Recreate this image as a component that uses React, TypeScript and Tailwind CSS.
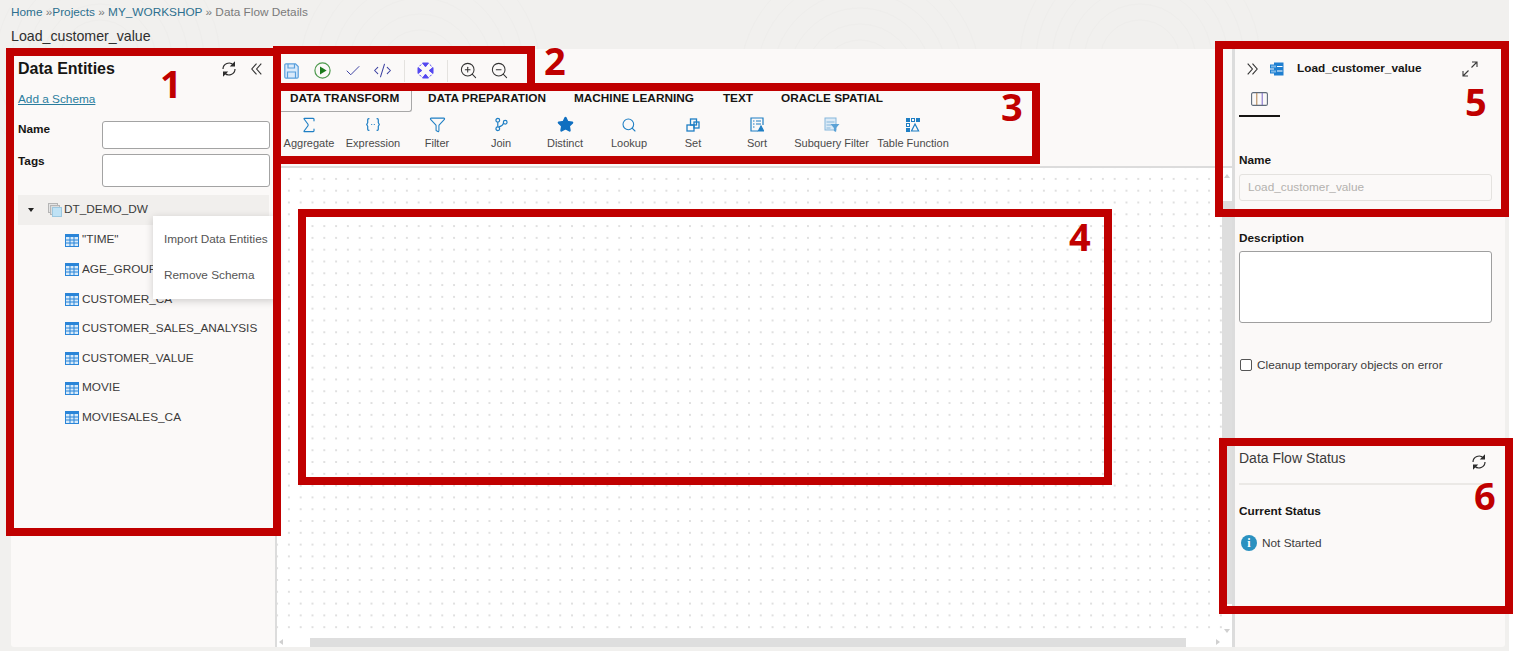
import { Check, CodeXml, Funnel, Search, Sigma, Star, ZoomIn, ZoomOut } from "lucide-react";
import type { ReactNode } from "react";

const ENTITIES = ['"TIME"', "AGE_GROUP", "CUSTOMER_CA", "CUSTOMER_SALES_ANALYSIS", "CUSTOMER_VALUE", "MOVIE", "MOVIESALES_CA"];

const Sync = ({ size = 16 }: { size?: number }) => (
  <svg width={size} height={size} viewBox="0 0 16 16" fill="none" stroke="#2b2b2b" strokeWidth="1.2">
    <path d="M2 8a6 6 0 0 1 10.4-4" />
    <path d="M14 8a6 6 0 0 1-10.4 4" />
    <path d="M13.4 1.6v3.2h-3.2z" fill="#2b2b2b" />
    <path d="M2.6 14.4v-3.2h3.2z" fill="#2b2b2b" />
  </svg>
);

const DoubleChevron = ({ flip = false }: { flip?: boolean }) => (
  <svg width="11" height="12" viewBox="0 0 11 12" fill="none" stroke="#333" strokeWidth="1.1" className={flip ? "rotate-180" : ""}>
    <path d="M5.5.6L.8 6l4.7 5.4" />
    <path d="M10.3.6L5.6 6l4.7 5.4" />
  </svg>
);

const TableIcon = () => (
  <svg width="14" height="13" viewBox="0 0 14 13" className="shrink-0">
    <rect width="14" height="13" fill="#2a85d8" />
    <rect x="1" y="3" width="12" height="9" fill="#d8ebfa" />
    <path d="M5 3v9M9 3v9M1 6h12M1 9h12" stroke="#2a85d8" strokeWidth="1" />
  </svg>
);

const SchemaIcon = () => (
  <svg width="14" height="14" viewBox="0 0 14 14">
    <rect x="0.5" y="0.5" width="9" height="9" fill="#e4e4e4" stroke="#b5b5b5" />
    <rect x="2.5" y="2.5" width="9" height="9" fill="#dcdcdc" stroke="#b5b5b5" />
    <rect x="4.5" y="4.5" width="9" height="9" fill="#bfe2f5" stroke="#9dc8e0" />
  </svg>
);

const SaveIcon = () => (
  <svg width="15" height="16" viewBox="0 0 15 16" fill="#dbeafa" stroke="#5a9fdc" strokeWidth="1.2">
    <path d="M2 .8h9.5l2.7 2.7V14a1.2 1.2 0 0 1-1.2 1.2H2A1.2 1.2 0 0 1 .8 14V2A1.2 1.2 0 0 1 2 .8z" />
    <path d="M4 1v4h6.5V1M3.5 15V9h8v6" fill="none" />
  </svg>
);

const RunIcon = () => (
  <svg width="17" height="17" viewBox="0 0 17 17">
    <circle cx="8.5" cy="8.5" r="7.6" fill="none" stroke="#4e9a4e" strokeWidth="1.2" />
    <path d="M6 4.5l6.6 4-6.6 4z" fill="#1c7a1c" />
  </svg>
);

const FitIcon = () => (
  <svg width="17" height="17" viewBox="0 0 17 17" fill="#5548f0" stroke="#5548f0" strokeWidth="1">
    <path d="M5.500 1h6L8.500 4.800z" />
    <path d="M5.500 16h6L8.500 12.200z" />
    <path d="M1 5.500v6L4.800 8.500z" />
    <path d="M16 5.500v6L12.200 8.500z" />
    <path d="M4.200 2.500L2.500 4.200M12.800 2.500L14.500 4.200M4.200 14.500L2.500 12.800M12.800 14.500L14.500 12.800" fill="none" />
  </svg>
);

const Expression = () => (
  <svg width="14" height="13" viewBox="0 0 14 13" fill="none" stroke="#1f7fc4" strokeWidth="1.2">
    <path d="M3.4.7h-.7a1 1 0 0 0-1 1v3L.7 6.5l1 1.800v3a1 1 0 0 0 1 1h.7" />
    <path d="M10.600.7h.7a1 1 0 0 1 1 1v3l1 1.800-1 1.800v3a1 1 0 0 1-1 1h-.7" />
    <path d="M5.200 6.500h1M7.800 6.500h1" />
  </svg>
);

const Join = () => (
  <svg width="13" height="15" viewBox="0 0 14 15" fill="none" stroke="#1f7fc4" strokeWidth="1.3">
    <circle cx="3" cy="3" r="2" />
    <circle cx="3" cy="12" r="2" />
    <circle cx="11" cy="5" r="2" />
    <path d="M3 5v5M9.200 6a6 6 0 0 1-5 4" />
  </svg>
);

const SetIcon = () => (
  <svg width="14" height="14" viewBox="0 0 14 14" fill="none" stroke="#1f7fc4" strokeWidth="1.300">
    <rect x="4.500" y="1" width="6" height="6" />
    <rect x="8" y="4" width="5" height="6" />
    <rect x="1" y="7" width="7" height="6" />
  </svg>
);

const SortIcon = () => (
  <svg width="14" height="15" viewBox="0 0 14 15" fill="none" stroke="#1f7fc4" strokeWidth="1.200">
    <path d="M8 14H1V1h12v7" />
    <path d="M3 4h1.500M6 4h5M3 7h1.500M6 7h5M3 10h1.500" />
    <path d="M11 9l2.600 5H8.400z" fill="#1f7fc4" />
  </svg>
);

const SubqueryIcon = () => (
  <svg width="16" height="16" viewBox="0 0 16 16" fill="none">
    <rect x="1" y="1" width="11" height="12" fill="#dcebf7" stroke="#86b7db" />
    <path d="M2.500 5h8M2.500 8h5M2.500 11h4" stroke="#86b7db" />
    <path d="M6.500 7h9l-3.400 4v4l-2.200-1v-3z" fill="#5ba2d6" />
  </svg>
);

const TableFunction = () => (
  <svg width="14" height="14" viewBox="0 0 14 14" fill="none" stroke="#1f7fc4">
    <rect x=".5" y=".5" width="3" height="3" fill="#1f7fc4" />
    <rect x="5.500" y=".5" width="3" height="3" />
    <rect x="10.500" y=".5" width="3" height="3" fill="#1f7fc4" />
    <rect x=".5" y="5.500" width="3" height="3" />
    <rect x=".5" y="10.500" width="3" height="3" fill="#1f7fc4" />
    <path d="M9 6l3.600 7H5.500z" strokeWidth="1.200" />
  </svg>
);

const FlowIcon = () => (
  <svg width="14" height="14" viewBox="0 0 14 14">
    <rect x="4" y="0.5" width="9.500" height="13" fill="#1f7fd0" />
    <path d="M5 4.500h7.500M5 9h7.500" stroke="#fff" />
    <rect x="0.5" y="3" width="6" height="3" fill="#7bb8e8" stroke="#1f7fd0" />
    <rect x="0.5" y="8" width="6" height="3" fill="#7bb8e8" stroke="#1f7fd0" />
  </svg>
);

const ExpandIcon = () => (
  <svg width="16" height="16" viewBox="0 0 16 16" fill="none" stroke="#3a3a3a" strokeWidth="1.100">
    <path d="M9.500 6.500L15 1M10 1h5v5" />
    <path d="M6.500 9.500L1 15M1 10v5h5" />
  </svg>
);

const ColumnsIcon = () => (
  <svg width="17" height="14" viewBox="0 0 17 14" fill="none">
    <rect x=".6" y=".6" width="15.800" height="12.800" rx="1.500" stroke="#5f6b7a" strokeWidth="1.100" />
    <path d="M5.800 1v12" stroke="#b07f4a" />
    <path d="M11.200 1v12" stroke="#7a68c8" />
  </svg>
);

const BackgroundSwirls = () => (
  <svg className="absolute inset-0 h-full w-full" viewBox="0 0 1509 651" fill="none" stroke="#eeedeb" strokeWidth="1">
    {[40, 56, 72, 88, 104, 120].map((r) => (
      <g key={r}>
        <circle cx="420" cy="70" r={r} />
        <circle cx="860" cy="80" r={r} />
        <circle cx="1140" cy="60" r={r} />
        <circle cx="100" cy="60" r={r} />
      </g>
    ))}
  </svg>
);

const PALETTE: { label: string; icon: ReactNode; width: string }[] = [
  { label: "Aggregate", icon: <Sigma size={20} color="#1f7fc4" strokeWidth={1.4} />, width: "w-16" },
  { label: "Expression", icon: <Expression />, width: "w-16" },
  { label: "Filter", icon: <Funnel size={17} color="#1f7fc4" strokeWidth={1.5} />, width: "w-16" },
  { label: "Join", icon: <Join />, width: "w-16" },
  { label: "Distinct", icon: <Star size={17} color="#0f6fc0" fill="#0f6fc0" />, width: "w-16" },
  { label: "Lookup", icon: <Search size={16} color="#1f7fc4" strokeWidth={1.6} />, width: "w-16" },
  { label: "Set", icon: <SetIcon />, width: "w-16" },
  { label: "Sort", icon: <SortIcon />, width: "w-16" },
  { label: "Subquery Filter", icon: <SubqueryIcon />, width: "w-[85px]" },
  { label: "Table Function", icon: <TableFunction />, width: "w-[78px]" },
];

const MARKS = [
  { box: "left-[6px] top-[48px] h-[488px] w-[275px]", num: "1", at: "left-[160px] top-[57px]" },
  { box: "left-[273px] top-[46px] h-[45px] w-[262px]", num: "2", at: "left-[544px] top-[34px]" },
  { box: "left-[273px] top-[83px] h-[81px] w-[767px]", num: "3", at: "left-[1001px] top-[80px]" },
  { box: "left-[298px] top-[209px] h-[276px] w-[814px]", num: "4", at: "left-[1069px] top-[210px]" },
  { box: "left-[1215px] top-[41px] h-[176px] w-[294px]", num: "5", at: "left-[1465px] top-[75px]" },
  { box: "left-[1219px] top-[438px] h-[176px] w-[294px]", num: "6", at: "left-[1474px] top-[469px]" },
];

export default function App() {
  return (
    <div className="relative h-[651px] w-full overflow-hidden bg-white font-['Liberation_Sans',Arial,sans-serif] text-[11.8px] text-[#3b3b3b]">
      <div className="relative h-[651px] w-[1509px] bg-[#f1f0ee]">
        <BackgroundSwirls />
        <div className="relative h-[49px] pl-[11px]">
          <div className="pt-[5px] leading-[14px] text-[#7a7a7a]">
            <span className="text-[#2c6f8f]">Home</span> »<span className="text-[#2c6f8f]">Projects</span> »{" "}
            <span className="text-[#2c6f8f]">MY_WORKSHOP</span> » Data Flow Details
          </div>
          <div className="mt-[9px] text-[14.2px] leading-4 text-[#2f2f2f]">Load_customer_value</div>
        </div>

        <div className="relative ml-[11px] flex h-[598px] w-[1494px] rounded-b-[3px] bg-[#fbf9f8]">
          {/* data entities */}
          <aside className="relative w-[266px] shrink-0 border-r-2 border-[#dcdcdc] pl-[7px] pr-[5px]">
            <div className="flex h-[38px] items-center pt-[1px]">
              <h2 className="text-base font-bold text-[#161513]">Data Entities</h2>
              <div className="ml-auto flex items-center gap-[14px] pr-[8px]">
                <Sync />
                <DoubleChevron />
              </div>
            </div>
            <a className="mt-[5px] block leading-[14px] text-[#2a7d9e] underline">Add a Schema</a>
            <div className="mt-[15px] flex h-[28px] items-start">
              <label className="w-[84px] pt-[1px] font-bold leading-[14px] text-[#161513]">Name</label>
              <input className="h-[28px] w-[168px] rounded-[3px] border border-[#a3a3a3] bg-white" />
            </div>
            <div className="mt-[5px] flex h-[33px] items-start">
              <label className="w-[84px] font-bold leading-[14px] text-[#161513]">Tags</label>
              <input className="h-[33px] w-[168px] rounded-[3px] border border-[#a3a3a3] bg-white" />
            </div>
            <div className="mt-[8px] flex h-[30px] w-[251px] items-center bg-[#f1efed] pl-[10px]">
              <span className="mr-[14px] h-0 w-0 border-x-[3px] border-t-[4px] border-x-transparent border-t-[#222]" />
              <SchemaIcon />
              <span className="ml-[2px]">DT_DEMO_DW</span>
            </div>
            <ul className="pl-[47px] pt-[0.5px]">
              {ENTITIES.map((name) => (
                <li key={name} className="flex h-[29.55px] items-center gap-[3px]">
                  <TableIcon />
                  <span>{name}</span>
                </li>
              ))}
            </ul>
            <div className="absolute left-[142px] top-[167px] h-[83px] w-[124px] bg-white pl-[11px] pt-[16px] text-[#555] shadow-[0_2px_8px_rgba(0,0,0,0.18)]">
              <div className="leading-[14px]">Import Data Entities</div>
              <div className="mt-[22px] leading-[14px]">Remove Schema</div>
            </div>
          </aside>

          {/* canvas */}
          <main className="flex min-w-0 flex-1 flex-col">
            <div className="flex h-[42px] shrink-0 items-center pl-[7px] pt-[1px]">
              <SaveIcon />
              <span className="ml-[15px]"><RunIcon /></span>
              <Check size={18} color="#3a3fa0" className="ml-[13px]" strokeWidth={1.3} />
              <CodeXml size={19} color="#3a3fa0" className="ml-[11px]" strokeWidth={1.3} />
              <span className="ml-[12px] h-[22px] w-px bg-[#e4e2df]" />
              <span className="ml-[12px]"><FitIcon /></span>
              <span className="ml-[13px] h-[22px] w-px bg-[#e4e2df]" />
              <ZoomIn size={19} color="#333" strokeWidth={1.3} className="ml-[11px]" />
              <ZoomOut size={19} color="#333" strokeWidth={1.3} className="ml-[12px]" />
            </div>
            <div className="flex h-[20px] shrink-0 items-start font-bold leading-[14px] text-[#161513]">
              <span className="h-[21px] w-[135px] rounded-br-[3px] border-r border-b border-[#a8a8a8] pl-[13px]">DATA TRANSFORM</span>
              <span className="ml-[16px]">DATA PREPARATION</span>
              <span className="ml-[28px]">MACHINE LEARNING</span>
              <span className="ml-[29px]">TEXT</span>
              <span className="ml-[28px]">ORACLE SPATIAL</span>
            </div>
            <div className="flex h-[55px] shrink-0 pt-[5px]">
              {PALETTE.map((item) => (
                <div key={item.label} className={`flex flex-col items-center ${item.width}`}>
                  <div className="flex h-[17px] items-center justify-center">{item.icon}</div>
                  <span className="mt-[3px] whitespace-nowrap text-[11px] leading-[14px] text-[#4a4a4a]">{item.label}</span>
                </div>
              ))}
            </div>
            <div className="flex min-h-0 flex-1 flex-col border-t-2 border-[#dcdcdc] bg-white">
              <div className="flex min-h-0 flex-1">
                <div className="flex-1 bg-[radial-gradient(#cccccc_0.6px,transparent_0.85px)] bg-[length:11.8px_11.8px] bg-[position:6px_5px]" />
                <div className="flex w-[10px] flex-col items-center">
                  <span className="mt-[6px] h-0 w-0 border-x-[3px] border-b-[4px] border-x-transparent border-b-[#d0d0d0]" />
                  <span className="mt-[23px] h-[403px] w-full bg-[#dedede]" />
                  <span className="mt-[25px] h-0 w-0 border-x-[3px] border-t-[4px] border-x-transparent border-t-[#d0d0d0]" />
                </div>
              </div>
              <div className="flex h-[9px] shrink-0 items-start">
                <span className="ml-[2px] mt-[1px] h-0 w-0 border-y-[3px] border-r-[4px] border-y-transparent border-r-[#d0d0d0]" />
                <span className="ml-[27px] h-[9px] w-[876px] bg-[#dedede]" />
                <span className="ml-[30px] mt-[1px] h-0 w-0 border-y-[3px] border-l-[4px] border-y-transparent border-l-[#d0d0d0]" />
              </div>
            </div>
          </main>

          {/* properties */}
          <aside className="w-[273px] shrink-0 border-l-[3px] border-[#dcdcdc] pl-[4px] pr-[13px]">
            <div className="flex h-[38px] items-center pt-[1px]">
              <span className="ml-[8px]"><DoubleChevron flip /></span>
              <span className="ml-[12px]"><FlowIcon /></span>
              <span className="ml-[13px] font-bold text-[#161513]">Load_customer_value</span>
              <span className="ml-[40px]"><ExpandIcon /></span>
            </div>
            <div className="flex h-[30px] w-[41px] items-start justify-center border-b-2 border-[#161513] pt-[5px]">
              <ColumnsIcon />
            </div>
            <div className="mt-[36px] font-bold leading-[14px] text-[#161513]">Name</div>
            <div className="mt-[7px] flex h-[27px] items-center rounded-[3px] border border-[#e4e2df] bg-[#fbf9f8] pl-[8px] text-[#b3b1ae]">Load_customer_value</div>
            <div className="mt-[30px] font-bold leading-[14px] text-[#161513]">Description</div>
            <textarea className="mt-[6px] block h-[72px] w-full resize-none rounded-[3px] border border-[#9f9f9f] bg-white" />
            <label className="mt-[35px] flex items-center pl-[1px] leading-[14px]">
              <span className="h-[12px] w-[12px] rounded-[2px] border border-[#555] bg-white" />
              <span className="ml-[5px]">Cleanup temporary objects on error</span>
            </label>
            <div className="mt-[78px] flex items-start">
              <span className="text-sm leading-4">Data Flow Status</span>
              <span className="ml-auto mr-[5px] mt-[4px]"><Sync /></span>
            </div>
            <div className="mt-[13px] h-[2px] bg-[#ebe9e6]" />
            <div className="mt-[19px] font-bold leading-[14px] text-[#161513]">Current Status</div>
            <div className="mt-[15px] flex items-center pl-[2px]">
              <span className="flex h-[16px] w-[16px] items-center justify-center rounded-full bg-[#2b91c0] font-['Liberation_Serif',serif] text-[12px] font-bold leading-none text-white">i</span>
              <span className="ml-[5px] mt-[2px]">Not Started</span>
            </div>
          </aside>
        </div>
      </div>

      {/* red call-outs */}
      {MARKS.map((mark) => (
        <div key={mark.num}>
          <div className={`absolute border-[8px] border-[#c00000] ${mark.box}`} />
          <span className={`absolute font-['Open_Sans',sans-serif] text-[38px] font-bold leading-[52px] text-[#c00000] ${mark.at}`}>{mark.num}</span>
        </div>
      ))}
    </div>
  );
}
